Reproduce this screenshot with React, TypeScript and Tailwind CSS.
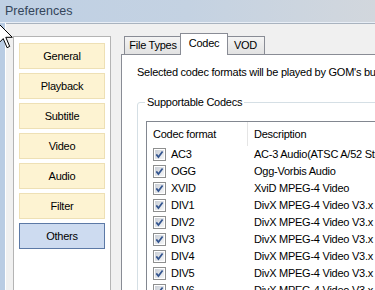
import React from "react";

const rows: [string, string][] = [
  ["AC3", "AC-3 Audio(ATSC A/52 Stream)"],
  ["OGG", "Ogg-Vorbis Audio"],
  ["XVID", "XviD MPEG-4 Video"],
  ["DIV1", "DivX MPEG-4 Video V3.x"],
  ["DIV2", "DivX MPEG-4 Video V3.x"],
  ["DIV3", "DivX MPEG-4 Video V3.x"],
  ["DIV4", "DivX MPEG-4 Video V3.x"],
  ["DIV5", "DivX MPEG-4 Video V3.x"],
  ["DIV6", "DivX MPEG-4 Video V3.x"],
];

const menu = ["General", "Playback", "Subtitle", "Video", "Audio", "Filter", "Others"];

function Check() {
  return (
    <svg width="13" height="13" viewBox="0 0 13 13" className="shrink-0">
      <defs>
        <linearGradient id="cbg" x1="0" y1="0" x2="1" y2="1">
          <stop offset="0" stopColor="#c9ced6" />
          <stop offset="1" stopColor="#f6f7f8" />
        </linearGradient>
      </defs>
      <rect x="0.5" y="0.5" width="12" height="12" fill="#fff" stroke="#8e8f8f" />
      <rect x="2" y="2" width="9" height="9" fill="url(#cbg)" />
      <path d="M3.3 6.4 L5.4 9 L9.6 3.4" fill="none" stroke="#34558f" strokeWidth="1.7" />
    </svg>
  );
}

export default function App() {
  return (
    <div className="relative w-[375px] h-[290px] overflow-hidden bg-[#f0f0f0] font-['Liberation_Sans',Arial,sans-serif] text-[11px] tracking-[-0.25px] text-black flex flex-col">
      {/* title bar */}
      <div className="h-[22px] shrink-0 bg-gradient-to-r from-[#bfd0e4] via-[#c4d2e2] to-[#d2d7dd] flex items-center pl-[5px] text-[12.5px] tracking-normal text-[#34455a]">
        Preferences
      </div>
      <div className="h-px bg-[#e8eef6] shrink-0" />
      <div className="flex flex-1 min-h-0">
        <div className="w-[5px] bg-[#b9cce3] shrink-0" />
        <div className="w-px bg-white shrink-0" />
        <div className="flex-1 flex border-t border-[#a9b3bf] items-start">
          {/* left menu */}
          <div className="ml-[7px] mt-[12px] w-[98px] h-[300px] shrink-0 bg-white border border-[#b4b4b4] pt-[6px] pl-[5px] flex flex-col gap-[4px]">
            {menu.map((m) => (
              <div
                key={m}
                className={
                  m === "Others"
                    ? "w-[86px] h-[26px] flex items-center justify-center bg-[#cddbf0] border border-[#5c79a6]"
                    : "w-[86px] h-[26px] flex items-center justify-center bg-[#fdf3d2] border border-[#eee0b5]"
                }
              >
                {m}
              </div>
            ))}
          </div>
          {/* right tabs */}
          <div className="ml-[10px] mt-[9px] w-[300px] shrink-0 flex flex-col">
            <div className="h-[21px] flex items-end pl-[3px]">
              <div className="w-[58px] h-[18px] flex items-center justify-center bg-gradient-to-b from-[#f4f4f4] to-[#e2e2e2] border border-b-0 border-[#898c95]">
                File Types
              </div>
              <div className="relative z-10 ml-[-2px] w-[48px] h-[22px] mb-[-1px] flex items-center justify-center bg-white border border-b-0 border-[#898c95] pb-[3px]">
                Codec
              </div>
              <div className="ml-[-2px] w-[39px] h-[18px] flex items-center justify-center bg-gradient-to-b from-[#f4f4f4] to-[#e2e2e2] border border-b-0 border-[#898c95]">
                VOD
              </div>
            </div>
            <div className="h-[300px] bg-white border-t border-l border-[#898c95] pl-[15px] pt-[10px]">
              <div className="whitespace-nowrap leading-[14px]">
                Selected codec formats will be played by GOM's built-in codecs.
              </div>
              <div className="relative mt-[23px] h-[300px] border border-[#d5dfe5] rounded-[3px] pl-[8px] pt-[18px]">
                <div className="absolute left-[7px] top-[-8px] bg-white px-[2px] leading-[14px]">
                  Supportable Codecs
                </div>
                <div className="h-[300px] border border-[#828790] bg-white">
                  <div className="h-[24px] flex items-center">
                    <div className="w-[100px] h-full flex items-center pl-[6px]">Codec format</div>
                    <div className="w-px h-full bg-[#e5e5e5]" />
                    <div className="pl-[6px]">Description</div>
                  </div>
                  {rows.map(([c, d]) => (
                    <div key={c} className="h-[17px] flex items-center whitespace-nowrap">
                      <div className="w-[101px] flex items-center pl-[6px] gap-[5px]">
                        <Check />
                        <span>{c}</span>
                      </div>
                      <div className="pl-[6px]">{d}</div>
                    </div>
                  ))}
                </div>
              </div>
            </div>
          </div>
        </div>
      </div>
      {/* mouse cursor */}
      <svg className="absolute left-0 top-0" width="20" height="50" viewBox="0 0 20 50">
        <polygon
          points="-2,23 -2,43.8 3.2,38.6 7.1,47.7 9.7,46.4 5.8,37.3 12.3,37.3"
          fill="#fff"
          stroke="#000"
          strokeWidth="1"
          strokeLinejoin="miter"
        />
      </svg>
    </div>
  );
}
